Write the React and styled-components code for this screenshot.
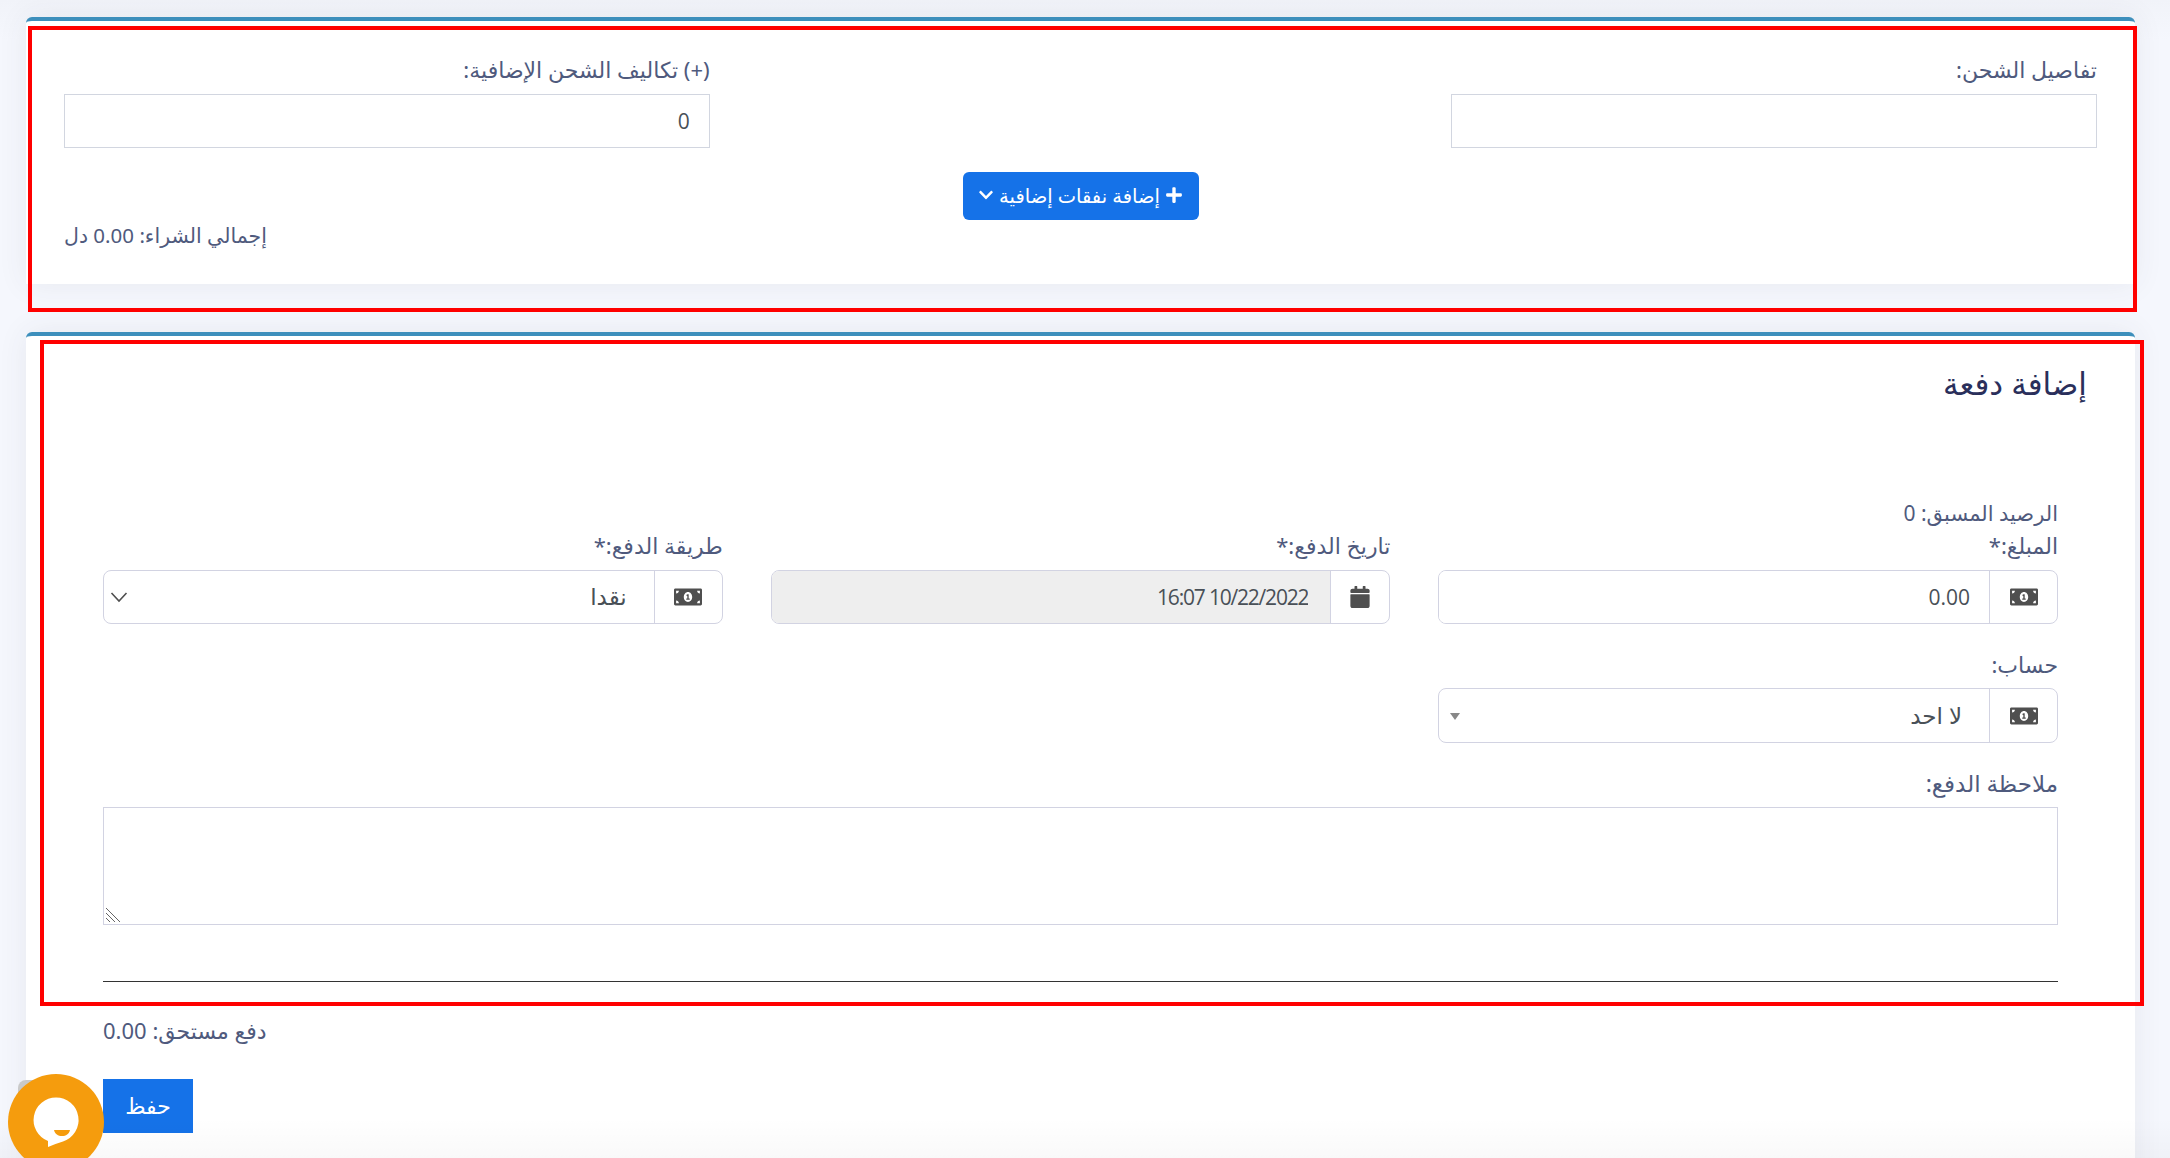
import styled, { createGlobalStyle } from "styled-components";
import { FaMoneyBillAlt, FaCalendar, FaPlus, FaChevronDown } from "react-icons/fa";

const GlobalStyle = createGlobalStyle`
  html, body {
    margin: 0;
    height: 100%;
    overflow: hidden;
    background: #f5f7fd;
  }
  * {
    box-sizing: border-box;
  }
  body {
    font-family: "Noto Sans", "DejaVu Sans", sans-serif;
    color: #4f5a7d;
  }
`;

const Page = styled.div`
  position: relative;
  height: 1158px;
  padding: 17px 35px 0 26px;
  overflow: hidden;
  background: linear-gradient(#f1f3f9, #f5f7fd 40px);
`;

const Card = styled.section`
  background: #fff;
  border-top: 4px solid #3d8fbc;
  border-radius: 6px 6px 0 0;
  box-shadow: 0 0 30px rgba(69, 65, 78, 0.08);
  padding: ${(props) => props.$padding};
  margin-bottom: 48px;
  height: ${(props) => props.$height};
`;

const Grid = styled.div`
  display: grid;
  grid-template-columns: repeat(3, 1fr);
  gap: 48px;
  align-items: end;
`;

const Cell = styled.div`
  min-width: 0;
`;

const Label = styled.label`
  display: block;
  font-size: ${(props) => props.$size || "22px"};
  line-height: ${(props) => props.$height || "24px"};
  margin-bottom: ${(props) => props.$gap || "13px"};
  text-align: right;
`;

const Line = styled.div`
  font-size: 21px;
  line-height: 32px;
  margin-bottom: 4px;
  text-align: right;
`;

const PlainInput = styled.input`
  display: block;
  width: 100%;
  height: 54px;
  padding: 0 19px;
  border: 1px solid #d2d6e0;
  background: #fff;
  font-family: "Open Sans", sans-serif;
  font-size: 21px;
  color: #495057;
  text-align: right;
  outline: none;
`;

const Center = styled.div`
  display: flex;
  justify-content: center;
  margin-top: 24px;
`;

const ExpenseButton = styled.button`
  display: flex;
  align-items: center;
  justify-content: center;
  gap: 5px;
  width: 236px;
  height: 48px;
  padding: 0 0 2px;
  border: none;
  border-radius: 6px;
  background: #1572e8;
  color: #fff;
  font-family: inherit;
  font-size: 19.5px;
  font-weight: 500;
`;

const Total = styled.div`
  font-size: 20.5px;
  line-height: 26px;
  margin-top: 2px;
  text-align: left;
`;

const Heading = styled.h4`
  margin: 0 -29px 0 0;
  font-size: 31px;
  font-weight: 500;
  line-height: 32px;
  color: #2a2f5b;
  text-align: right;
`;

const Group = styled.div`
  display: flex;
  height: ${(props) => props.$height || "54px"};
  border: 1px solid #d2d3e2;
  border-radius: 8px;
  overflow: hidden;
  background: #fff;
`;

const Addon = styled.span`
  flex: 0 0 ${(props) => props.$width || "68px"};
  display: flex;
  align-items: center;
  justify-content: center;
  border-left: 1px solid #d2d3e2;
  color: #4f4f4f;
  font-size: ${(props) => props.$size || "28px"};
`;

const GroupInput = styled.input`
  flex: 1;
  min-width: 0;
  padding: 0 ${(props) => (props.$disabled ? "22px" : "19px")} 0 19px;
  border: none;
  outline: none;
  font-family: "Open Sans", sans-serif;
  font-size: 21px;
  letter-spacing: ${(props) => (props.$disabled ? "-1.2px" : "0")};
  color: #495057;
  text-align: right;
  background: ${(props) => (props.$disabled ? "#eeeeee" : "#fff")};
`;

const SelectBox = styled.div`
  flex: 1;
  position: relative;
  display: flex;
  align-items: center;
  padding: 0 27px 2px;
  font-size: 23px;
  color: #495057;
`;

const Chevron = styled.svg`
  position: absolute;
  left: 6px;
  top: 20px;
  width: 18px;
  height: 12px;
  fill: none;
  stroke: #4f4f4f;
  stroke-width: 1.6;
`;

const Caret = styled.span`
  position: absolute;
  left: 11px;
  top: 24px;
  border-style: solid;
  border-width: 7px 5.5px 0;
  border-color: #888 transparent transparent;
`;

const Row = styled.div`
  margin-top: ${(props) => props.$top};
`;

const NoteWrap = styled.div`
  position: relative;
`;

const Note = styled.textarea`
  display: block;
  width: 100%;
  height: 118px;
  border: 1px solid #d2d3e2;
  outline: none;
  background: #fff;
  resize: none;
`;

const Grip = styled.svg`
  position: absolute;
  left: 2px;
  bottom: 3px;
  width: 15px;
  height: 15px;
  stroke: #666;
  stroke-width: 1;
`;

const Rule = styled.hr`
  margin: 56px 0 0;
  border: none;
  border-top: 1px solid #333;
`;

const Due = styled.div`
  font-size: 22px;
  line-height: 32px;
  margin-top: 32px;
  text-align: left;
`;

const SaveButton = styled.button`
  display: block;
  width: 90px;
  height: 54px;
  margin: 33px auto 0 0;
  padding: 0 0 2px;
  border: none;
  background: #1572e8;
  color: #fff;
  font-family: inherit;
  font-size: 22px;
`;

const Annotation = styled.div`
  position: absolute;
  left: ${(props) => props.$left}px;
  top: ${(props) => props.$top}px;
  width: ${(props) => props.$width}px;
  height: ${(props) => props.$height}px;
  border: 4px solid #ff0000;
  pointer-events: none;
`;

const BottomFade = styled.div`
  position: absolute;
  left: 0;
  right: 0;
  bottom: 0;
  height: 40px;
  background: linear-gradient(rgba(0, 0, 0, 0), rgba(0, 0, 0, 0.025));
  pointer-events: none;
`;

const ChatPeek = styled.div`
  position: absolute;
  left: 18px;
  top: 1080px;
  width: 30px;
  height: 40px;
  border-radius: 8px;
  background: #c9c9c9;
`;

const ChatWidget = styled.div`
  position: absolute;
  left: 8px;
  top: 1074px;
  width: 96px;
  height: 96px;
  border-radius: 50%;
  background: #f59c0d;
  display: flex;
  align-items: center;
  justify-content: center;
`;

const App = () => {
  return (
    <>
      <GlobalStyle />
      <Page>
        <Card $padding="35px 38px 0 38px" $height="267px" dir="rtl">
          <Grid>
            <Cell>
              <Label $height="26px" $gap="12px">تفاصيل الشحن:</Label>
              <PlainInput readOnly />
            </Cell>
            <Cell />
            <Cell>
              <Label $height="26px" $gap="12px">(+) تكاليف الشحن الإضافية:</Label>
              <PlainInput readOnly value="0" />
            </Cell>
          </Grid>
          <Center>
            <ExpenseButton>
              <FaPlus size={18} />
              إضافة نفقات إضافية
              <FaChevronDown size={16} />
            </ExpenseButton>
          </Center>
          <Total>إجمالي الشراء: 0.00 دل</Total>
        </Card>

        <Card $padding="31px 77px 200px" dir="rtl">
          <Heading>إضافة دفعة</Heading>
          <Row $top="98px">
            <Grid>
              <Cell>
                <Line>الرصيد المسبق: 0</Line>
                <Label>المبلغ:*</Label>
                <Group>
                  <Addon><FaMoneyBillAlt /></Addon>
                  <GroupInput readOnly value="0.00" />
                </Group>
              </Cell>
              <Cell>
                <Label>تاريخ الدفع:*</Label>
                <Group>
                  <Addon $size="22px" $width="59px"><FaCalendar /></Addon>
                  <GroupInput readOnly $disabled value="10/22/2022 16:07" />
                </Group>
              </Cell>
              <Cell>
                <Label>طريقة الدفع:*</Label>
                <Group>
                  <Addon><FaMoneyBillAlt /></Addon>
                  <SelectBox>
                    نقدا
                    <Chevron viewBox="0 0 18 12"><path d="M1.5 2 L9 10 L16.5 2" /></Chevron>
                  </SelectBox>
                </Group>
              </Cell>
            </Grid>
          </Row>
          <Row $top="26px">
            <Grid>
              <Cell>
                <Label $height="28px" $gap="10px">حساب:</Label>
                <Group $height="55px">
                  <Addon><FaMoneyBillAlt /></Addon>
                  <SelectBox>
                    لا احد
                    <Caret />
                  </SelectBox>
                </Group>
              </Cell>
            </Grid>
          </Row>
          <Row $top="28px">
            <Label $size="23px" $gap="12px">ملاحظة الدفع:</Label>
            <NoteWrap>
              <Note dir="rtl" />
              <Grip viewBox="0 0 15 15">
                <path d="M1 1 L15 15 M1 6 L10 15 M1 11 L5 15" />
              </Grip>
            </NoteWrap>
          </Row>
          <Rule />
          <Due>دفع مستحق: 0.00</Due>
          <SaveButton>حفظ</SaveButton>
        </Card>

        <BottomFade />
        <Annotation $left={28} $top={26} $width={2109} $height={286} />
        <Annotation $left={40} $top={340} $width={2104} $height={666} />
        <ChatPeek />
        <ChatWidget>
          <svg width="60" height="64" viewBox="0 0 60 64">
            <path d="M30 7.5a22.5 22.5 0 0 1 7 43.9C32 53 27 54.5 22 57l0-6A22.5 22.5 0 0 1 30 7.5z" fill="#fff" />
            <path d="M28 40h16c-1 4-4 6-8 6s-7-2-8-6z" fill="#f59c0d" />
          </svg>
        </ChatWidget>
      </Page>
    </>
  );
};

export default App;
